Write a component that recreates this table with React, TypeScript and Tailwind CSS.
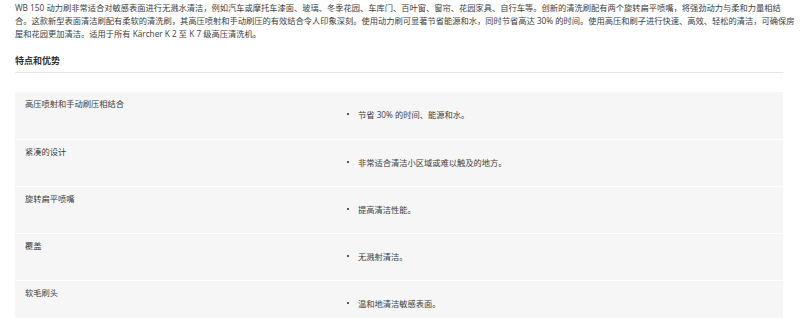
import React from "react";

const rows = [
  { label: "高压喷射和手动刷压相结合", item: "节省 30% 的时间、能源和水。" },
  { label: "紧凑的设计", item: "非常适合清洁小区域或难以触及的地方。" },
  { label: "旋转扁平喷嘴", item: "提高清洁性能。" },
  { label: "覆盖", item: "无溅射清洁。" },
  { label: "软毛刷头", item: "温和地清洁敏感表面。" },
];

export default function App() {
  return (
    <div
      className="w-[800px] h-[318px] overflow-hidden bg-white text-[#3d3d3d]"
      style={{ fontFamily: '"Open Sans", "Noto Sans CJK SC", sans-serif' }}
    >
      <div className="pl-[15px] pr-[17px]">
        <p className="text-[8.25px] leading-[13px] pt-[1px]">
          <span className="block whitespace-nowrap">
            WB 150 动力刷非常适合对敏感表面进行无溅水清洁，例如汽车或摩托车漆面、玻璃、冬季花园、车库门、百叶窗、窗帘、花园家具、自行车等。创新的清洗刷配有两个旋转扁平喷嘴，将强劲动力与柔和力量相结
          </span>
          <span className="block whitespace-nowrap">
            合。这款新型表面清洁刷配有柔软的清洗刷，其高压喷射和手动刷压的有效结合令人印象深刻。使用动力刷可显著节省能源和水，同时节省高达 30% 的时间。使用高压和刷子进行快速、高效、轻松的清洁，可确保房
          </span>
          <span className="block whitespace-nowrap">
            屋和花园更加清洁。适用于所有 Kärcher K 2 至 K 7 级高压清洗机。
          </span>
        </p>
        <div className="mt-[14px] border-b border-[#e6e6e6] pb-[5px]">
          <h3 className="text-[9px] leading-[13px] font-bold text-[#333]">特点和优势</h3>
        </div>
        <div className="mt-[19px]">
          {rows.map((r, i) => (
            <div
              key={i}
              className={`grid grid-cols-[325px_1fr] bg-[#f6f6f6] h-[47px] ${i > 0 ? "border-t border-white" : ""}`}
            >
              <div className="pl-[10px] pt-[4.5px] text-[8.25px] leading-[13px]">{r.label}</div>
              <div className="pt-[15.5px] text-[8.25px] leading-[13px]">
                <div className="flex items-center">
                  <span className="ml-[7px] mr-[9px] w-[2px] h-[2px] bg-[#555] inline-block" />
                  <span>{r.item}</span>
                </div>
              </div>
            </div>
          ))}
        </div>
      </div>
    </div>
  );
}
